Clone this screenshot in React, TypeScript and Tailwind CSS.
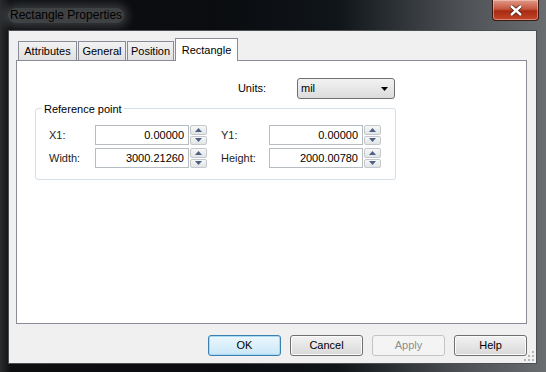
import React from 'react';

const tabs = [
  { label: 'Attributes', w: 'w-[59px]' },
  { label: 'General', w: 'w-[48px]' },
  { label: 'Position', w: 'w-[47px]' },
];

const Spinner = () => (
  <div className="ml-px flex h-[20px] w-[17px] flex-col gap-px">
    {[0, 1].map((i) => (
      <div
        key={i}
        className="flex flex-1 items-center justify-center rounded-[2px] border border-[#c3c8cc] bg-gradient-to-b from-[#f7f7f7] to-[#e2e4e6]"
      >
        <svg width="7" height="4" viewBox="0 0 7 4">
          {i === 0 ? <path d="M0 4 L3.5 0 L7 4 Z" fill="#4d6185" /> : <path d="M0 0 L3.5 4 L7 0 Z" fill="#4d6185" />}
        </svg>
      </div>
    ))}
  </div>
);

const Field = ({ label, value, labelW }: { label: string; value: string; labelW: string }) => (
  <div className="flex items-center">
    <span className={`${labelW} text-[11px] text-[#1e1e1e]`}>{label}</span>
    <div className="flex h-[20px] w-[94px] items-center justify-end border border-[#b7bcc2] bg-white pr-[4px] text-[11px] text-black">
      {value}
    </div>
    <Spinner />
  </div>
);

const Button = ({ label, variant }: { label: string; variant?: 'default' | 'disabled' }) => {
  const cls =
    variant === 'default'
      ? 'border-[#3c7fb1] bg-gradient-to-b from-[#ecf7fd] to-[#c9e7f8] text-black shadow-[inset_0_0_0_1px_#a8daf6]'
      : variant === 'disabled'
        ? 'border-[#c2c4c6] bg-[#f4f4f4] text-[#8d8d8d]'
        : 'border-[#707070] bg-gradient-to-b from-[#f2f2f2] to-[#d9d9d9] text-black shadow-[inset_0_0_0_1px_#fbfbfb]';
  return (
    <div className={`flex h-[21px] w-[73px] items-center justify-center rounded-[3px] border text-[11px] ${cls}`}>
      {label}
    </div>
  );
};

export default function App() {
  return (
    <div
      className="flex h-[372px] w-[546px] flex-col overflow-hidden bg-[linear-gradient(90deg,#2a2c2e_0%,#0c0e10_2%,#0a0c0f_40%,#10151a_62%,#4c5054_84%,#6a6d70_100%)] pb-[8px] pl-[8px] pr-[9px]"
      style={{ fontFamily: '"Liberation Sans", Arial, sans-serif' }}
    >
      {/* title bar */}
      <div className="flex h-[30px] items-start justify-between">
        <div className="mt-[8px] rounded-[10px] bg-[#b9bcbe]/30 px-[2px] text-[12px] leading-[15px] text-black shadow-[0_0_8px_4px_rgba(185,188,190,0.25)]">
          Rectangle Properties
        </div>
        <div className="mr-[-2px] flex h-[21px] w-[47px] items-center justify-center rounded-b-[4px] border border-t-0 border-[#3a1a14] bg-[linear-gradient(180deg,#e09a88_0%,#c5563f_45%,#a82a12_55%,#c4472a_100%)] shadow-[inset_0_0_0_1px_rgba(255,220,210,0.45)]">
          <svg width="14" height="11" viewBox="0 0 14 11">
            <path d="M2 1 L12 10 M12 1 L2 10" stroke="#4a1a10" strokeWidth="4" />
            <path d="M2 1 L12 10 M12 1 L2 10" stroke="#ffffff" strokeWidth="2.4" />
          </svg>
        </div>
      </div>

      {/* client area */}
      <div className="relative flex flex-1 flex-col border border-[#4b4f52] bg-[#f0f0f0] pl-[7px] pr-[9px] pt-[7px]">
        {/* tabs */}
        <div className="flex h-[22px] items-end pl-[2px]">
          {tabs.map((t) => (
            <div
              key={t.label}
              className={`mr-px flex h-[19px] ${t.w} items-center justify-center border border-b-0 border-[#898c95] bg-gradient-to-b from-[#f2f2f2] to-[#e1e1e1] text-[11px] text-black`}
            >
              {t.label}
            </div>
          ))}
          <div className="relative z-10 mb-[-1px] flex h-[23px] w-[63px] items-center justify-center border border-b-0 border-[#898c95] bg-white text-[11px] text-black">
            Rectangle
          </div>
        </div>

        {/* panel */}
        <div className="h-[264px] border border-[#898c95] bg-white pl-[18px]">
          <div className="mt-[17px] flex w-[360px] items-center justify-end">
            <span className="mr-[31px] text-[11px] text-black">Units:</span>
            <div className="flex h-[21px] w-[98px] items-center justify-between rounded-[3px] border border-[#707070] bg-gradient-to-b from-[#f2f2f2] to-[#dcdcdc] pl-[3px] pr-[6px] text-[11px] text-black">
              <span>mil</span>
              <svg width="7" height="4" viewBox="0 0 7 4">
                <path d="M0 0 L7 0 L3.5 4 Z" fill="#000" />
              </svg>
            </div>
          </div>

          <div className="relative mt-[9px] h-[72px] w-[361px] rounded-[3px] border border-[#d5dfe5] pl-[13px] pt-[16px]">
            <span className="absolute left-[6px] top-[-8px] bg-white px-[2px] text-[11px] text-black">
              Reference point
            </span>
            <div className="flex flex-col gap-[3px]">
              <div className="flex gap-[14px]">
                <Field label="X1:" value="0.00000" labelW="w-[46px]" />
                <Field label="Y1:" value="0.00000" labelW="w-[48px]" />
              </div>
              <div className="flex gap-[14px]">
                <Field label="Width:" value="3000.21260" labelW="w-[46px]" />
                <Field label="Height:" value="2000.00780" labelW="w-[48px]" />
              </div>
            </div>
          </div>
        </div>

        {/* buttons */}
        <div className="mt-[11px] flex justify-end gap-[9px]">
          <Button label="OK" variant="default" />
          <Button label="Cancel" />
          <Button label="Apply" variant="disabled" />
          <Button label="Help" />
        </div>

        {/* size grip */}
        <svg className="absolute bottom-[1px] right-[1px]" width="11" height="11" viewBox="0 0 11 11">
          {[
            [8, 0],
            [8, 4],
            [4, 4],
            [8, 8],
            [4, 8],
            [0, 8],
          ].map(([x, y], i) => (
            <rect key={i} x={x} y={y} width="2" height="2" fill="#b5b5b5" />
          ))}
        </svg>
      </div>
    </div>
  );
}
